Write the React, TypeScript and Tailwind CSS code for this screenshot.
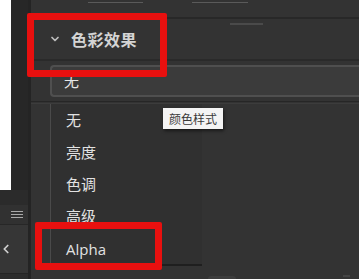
import { ChevronDown, ChevronLeft } from "lucide-react";

const CJK = "font-['Noto_Sans_CJK_SC','Noto_Sans',sans-serif]";
const ITEMS = ["无", "亮度", "色调", "高级", "Alpha"];

// ─── Left rail ──────────────────────────────────────────────────────────────
function LeftRail() {
  return (
    <div className="w-[31px] h-full flex shrink-0">
      <div className="w-[28px] h-full flex flex-col bg-[#2a2a2a]">
        <div className="h-[190px] flex">
          <div className="w-[11px] h-full bg-white" />
          <div className="flex-1 bg-[#272727]" />
        </div>
        <div className="h-[15px] bg-[#2b2b2b]" />
        <div className="h-[20px] flex items-center justify-end pr-[5px] bg-[#313131] border-b border-[#272727]">
          <div className="flex flex-col gap-[2px]">
            <div className="w-[12px] h-px bg-[#a8a8a8]" />
            <div className="w-[12px] h-px bg-[#a8a8a8]" />
            <div className="w-[12px] h-px bg-[#a8a8a8]" />
          </div>
        </div>
        <div className="h-[49px] flex items-center bg-[#363636] border-b border-[#262626]">
          <ChevronLeft size={14} strokeWidth={3} className="text-[#d0d0d0] -ml-[1px]" />
        </div>
        <div className="flex-1 bg-[#2d2d2d]" />
      </div>
      <div className="w-[3px] h-full bg-[#242424]" />
    </div>
  );
}

// ─── Panel ──────────────────────────────────────────────────────────────────
function Panel() {
  return (
    <div className="flex-1 h-full flex flex-col bg-[#333333]">
      {/* top strip */}
      <div className="h-[19px] flex pl-[57px] pt-[2px] gap-[49px] border-b-2 border-[#282828]">
        <div className="w-[55px] h-px bg-[#5a5a5a]" />
        <div className="w-[56px] h-px bg-[#5a5a5a]" />
      </div>

      {/* section header */}
      <div className="relative h-[42px] flex items-center pl-[18px] border-b-2 border-[#2a2a2a]">
        <ChevronDown size={12} strokeWidth={3.5} className="text-[#bdbdbd]" />
        <span className={`${CJK} ml-[10px] text-[16px] font-bold tracking-[0.5px] text-[#d4d4d4]`}>
          色彩效果
        </span>
        <div className="absolute left-[199px] top-[4px] w-[33px] h-[2px] bg-[#4a4a4a]" />
      </div>

      {/* select */}
      <div className="pl-[19px] pt-[4px]">
        <div className="h-[32px] flex items-center pl-[12px] rounded-l-[4px] border-2 border-r-0 border-[#4f4f4f] bg-[#3b3b3b]">
          <span className={`${CJK} text-[15px] text-[#e6e6e6]`}>无</span>
        </div>
      </div>
      <div className="h-[5px] border-b border-[#262626]" />
      <div className="h-[2px] border-b border-[#3c3c3c]" />

      {/* dropdown list */}
      <div className="relative flex-1">
        <div className="ml-[19px] w-[152px] border-l border-b-2 border-[#4a4a4a] border-b-[#1f1f1f] bg-[#303030]">
          {ITEMS.map((item) => (
            <div
              key={item}
              className={`h-[32px] flex items-center pl-[15px] text-[15px] text-[#e2e2e2] ${
                item === "Alpha" ? "font-['Open_Sans',sans-serif] text-[14px] pt-[2px]" : CJK
              }`}
            >
              {item}
            </div>
          ))}
        </div>
        <div className="absolute left-[177px] bottom-[-3px] w-[28px] h-[6px] rounded-full bg-[#3d3d3d]" />
        <div className="absolute right-[9px] bottom-[2px] w-[7px] h-[2px] bg-[#444]" />
      </div>
    </div>
  );
}

export default function App() {
  return (
    <div className="relative w-[359px] h-[279px] overflow-hidden flex bg-[#333333]">
      <LeftRail />
      <Panel />

      {/* tooltip */}
      <div
        className={`${CJK} absolute left-[163px] top-[108px] w-[60px] h-[21px] flex items-center justify-center bg-[#f4f4f4] text-[#3a3a3a] text-[12px] shadow-[1px_2px_3px_rgba(0,0,0,0.5)]`}
      >
        颜色样式
      </div>

      {/* annotations */}
      <div className="absolute left-[27px] top-[13px] w-[140px] h-[64px] border-[7px] border-[#e8100f] rounded-[2px]" />
      <div className="absolute left-[35px] top-[222px] w-[127px] h-[48px] border-[7px] border-[#e8100f] rounded-[2px]" />
    </div>
  );
}
